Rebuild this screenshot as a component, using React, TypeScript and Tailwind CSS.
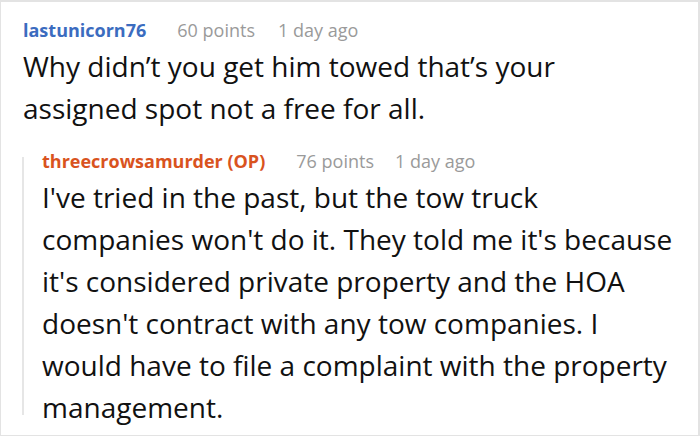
import React from 'react';

export default function App() {
  return (
    <div className="w-[700px] h-[436px] bg-white border border-[#e3e3e3] border-r-2 border-t-2 overflow-hidden font-['Open_Sans',sans-serif]">
      <div className="pl-[21px] pt-[13px]">
        {/* Parent comment */}
        <div className="pl-[1px]">
          <div className="flex items-baseline text-[18px] leading-[30px]">
            <span className="font-bold text-[#3b6cbf]">lastunicorn76</span>
            <span className="ml-[31px] text-[#9a9a9a]">60 points</span>
            <span className="ml-[23px] text-[#9a9a9a]">1 day ago</span>
          </div>
          <p className="text-[28px] leading-[42px] text-[#111] whitespace-nowrap">
            Why didn’t you get him towed that’s your
            <br />
            assigned spot not a free for all.
          </p>
        </div>

        {/* Reply */}
        <div className="mt-[17px] flex gap-[18px]">
          <div className="w-[2px] mt-[11px] mb-[13px] bg-[#e6e6e6]" />
          <div>
            <div className="flex items-baseline text-[18px] leading-[30px]">
              <span className="font-bold text-[#d9531e]">threecrowsamurder (OP)</span>
              <span className="ml-[31px] text-[#9a9a9a]">76 points</span>
              <span className="ml-[21px] text-[#9a9a9a]">1 day ago</span>
            </div>
            <p className="text-[28px] leading-[42px] text-[#111] whitespace-nowrap">
              I've tried in the past, but the tow truck
              <br />
              companies won't do it. They told me it's because
              <br />
              it's considered private property and the HOA
              <br />
              doesn't contract with any tow companies. I
              <br />
              would have to file a complaint with the property
              <br />
              management.
            </p>
          </div>
        </div>
      </div>
    </div>
  );
}
